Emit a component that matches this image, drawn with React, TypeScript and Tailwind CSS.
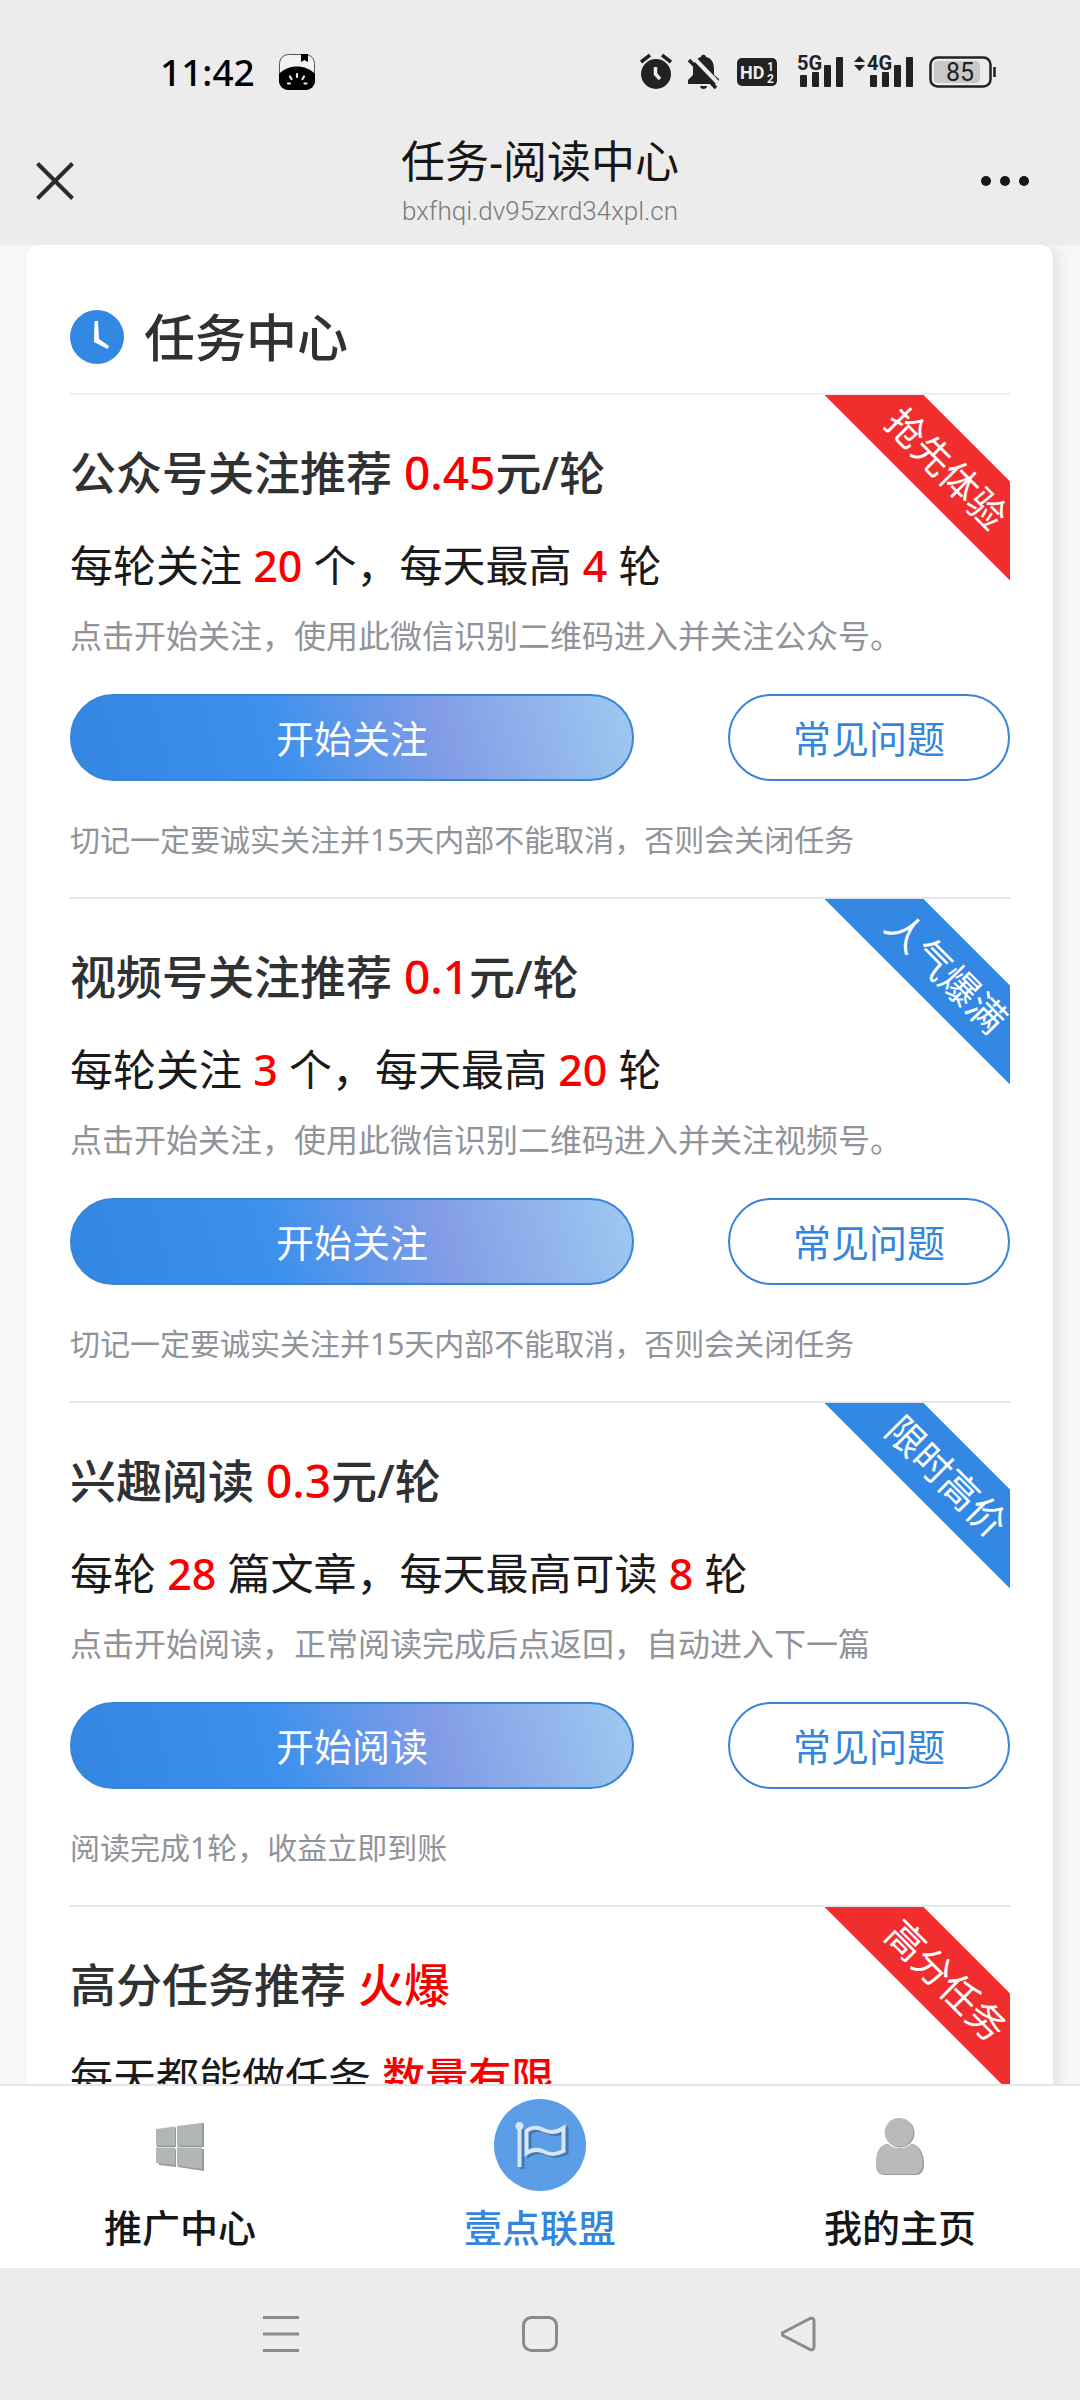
import type { ReactNode } from 'react';

type Task = {
  title: string;
  price: string;
  unit?: string;
  detail: ReactNode;
  desc?: string;
  action?: string;
  note?: string;
  badge: string;
  color: 'red' | 'blue';
};

const Num = ({ children }: { children: ReactNode }) => (
  <span className="font-medium text-[#f90000]">{children}</span>
);

const tasks: Task[] = [
  {
    title: '公众号关注推荐',
    price: '0.45',
    unit: '元/轮',
    detail: <>每轮关注 <Num>20</Num> 个，每天最高 <Num>4</Num> 轮</>,
    desc: '点击开始关注，使用此微信识别二维码进入并关注公众号。',
    action: '开始关注',
    note: '切记一定要诚实关注并15天内部不能取消，否则会关闭任务',
    badge: '抢先体验',
    color: 'red',
  },
  {
    title: '视频号关注推荐',
    price: '0.1',
    unit: '元/轮',
    detail: <>每轮关注 <Num>3</Num> 个，每天最高 <Num>20</Num> 轮</>,
    desc: '点击开始关注，使用此微信识别二维码进入并关注视频号。',
    action: '开始关注',
    note: '切记一定要诚实关注并15天内部不能取消，否则会关闭任务',
    badge: '人气爆满',
    color: 'blue',
  },
  {
    title: '兴趣阅读',
    price: '0.3',
    unit: '元/轮',
    detail: <>每轮 <Num>28</Num> 篇文章，每天最高可读 <Num>8</Num> 轮</>,
    desc: '点击开始阅读，正常阅读完成后点返回，自动进入下一篇',
    action: '开始阅读',
    note: '阅读完成1轮，收益立即到账',
    badge: '限时高价',
    color: 'blue',
  },
  {
    title: '高分任务推荐',
    price: '火爆',
    detail: <>每天都能做任务 <Num>数量有限</Num></>,
    badge: '高分任务',
    color: 'red',
  },
];

function SignalBars({ label, arrows }: { label: string; arrows?: boolean }) {
  return (
    <svg className="overflow-visible" width="62" height="34" viewBox="0 0 62 34" fill="#222">
      {arrows && <path d="M3 7h11L8.500 1zM3 10h11l-5.500 6z" />}
      <text x="16" y="15" fontFamily="'Liberation Sans Narrow', Roboto" fontWeight="700" fontSize="20">
        {label}
      </text>
      <rect x="19" y="20" width="7" height="12" rx="1" />
      <rect x="31" y="17" width="7" height="15" rx="1" />
      <rect x="43" y="10" width="7" height="22" rx="1" />
      <rect x="55" y="2" width="7" height="30" rx="1" />
    </svg>
  );
}

function StatusBar() {
  return (
    <div className="flex h-[116px] items-center justify-between pt-7 pr-[83px] pl-40">
      <div className="flex items-center gap-6">
        <span className="text-[37px] leading-9 font-medium text-black">11:42</span>
        <svg width="36" height="36" viewBox="0 0 36 36">
          <rect x=".5" y=".5" width="35" height="35" rx="9" fill="#f2f2f2" stroke="#555" strokeWidth="1" />
          <path d="M0 20C9 10 27 10 36 20v7a9 9 0 0 1-9 9H9a9 9 0 0 1-9-9z" fill="#000" />
          <path d="M22 0h7v8l-3.5-2L22 8z" fill="#000" />
          <g stroke="#ececec" strokeWidth="2.2" strokeLinecap="round">
            <path d="M18 20v3M11 22.500l1.500 2.500M25 22.500l-1.500 2.500M9 29.500h2M25.500 29.500h2" />
          </g>
        </svg>
      </div>
      <div className="flex items-center">
        <svg className="mr-4" width="32" height="36" viewBox="0 0 32 36">
          <circle cx="16" cy="20" r="15" fill="#222" />
          <path d="M1 8l9-7M31 8l-9-7" stroke="#222" strokeWidth="3.500" />
          <path d="M15.500 13v7l4.500 5" fill="none" stroke="#ececec" strokeWidth="3.500" />
        </svg>
        <svg className="mr-[18px]" width="31" height="36" viewBox="0 0 31 36">
          <path d="M0 30v-4l5-5v-6C5 8 9 4 13 3c0-3 5-3 5 0 5 1 8 5 8 12v6l5 4v5z" fill="#222" />
          <path d="M12 32h7c0 4-7 4-7 0z" fill="#222" />
          <path d="M4 2l28 29" stroke="#ececec" strokeWidth="4" />
          <path d="M1 6l27 28" stroke="#222" strokeWidth="3.500" />
        </svg>
        <svg className="mr-1" width="40" height="28" viewBox="0 0 40 28">
          <rect width="40" height="28" rx="5" fill="#222" />
          <g fill="#ececec" fontFamily="'Liberation Sans Narrow', Roboto" fontWeight="700">
            <text x="3" y="21" fontSize="18">HD</text>
            <text x="30" y="13" fontSize="12">1</text>
            <text x="30" y="25" fontSize="12">2</text>
          </g>
        </svg>
        <SignalBars label="5G" />
        <span className="w-2" />
        <SignalBars label="4G" arrows />
        <svg className="ml-4" width="68" height="32" viewBox="0 0 68 32">
          <rect x="1.500" y="1.500" width="60" height="29" rx="7" fill="none" stroke="#222" strokeWidth="2.500" />
          <rect x="5" y="5" width="46" height="22" rx="4" fill="#c8c8c8" />
          <path d="M65.500 11v10" stroke="#222" strokeWidth="2.500" />
          <text x="31" y="25" textAnchor="middle" fontFamily="Roboto" fontSize="25" fill="#222">85</text>
        </svg>
      </div>
    </div>
  );
}

function TitleBar() {
  return (
    <div className="flex h-[129px] items-center justify-between px-9">
      <button type="button" aria-label="关闭" className="w-14">
        <svg width="38" height="38" viewBox="0 0 38 38" stroke="#2c2c2c" strokeWidth="4">
          <path d="M1.500 1.500l35 35M36.500 1.500l-35 35" />
        </svg>
      </button>
      <div className="flex flex-col items-center gap-1">
        <h1 className="text-[44px] leading-14 text-[#161616]">任务-阅读中心</h1>
        <p className="font-['Roboto'] text-[26px] leading-9 font-light text-[#7b7b7b]">bxfhqi.dv95zxrd34xpl.cn</p>
      </div>
      <button type="button" aria-label="更多" className="flex w-14 justify-end gap-[9px] pr-[15px]">
        <span className="size-2.5 shrink-0 rounded-full bg-[#161616]" />
        <span className="size-2.5 shrink-0 rounded-full bg-[#161616]" />
        <span className="size-2.5 shrink-0 rounded-full bg-[#161616]" />
      </button>
    </div>
  );
}

function TaskItem({ task }: { task: Task }) {
  return (
    <section className="relative border-b-2 border-[#e4e7ed] pt-[45px] pb-[37px]">
      <div className="absolute top-0 right-0 size-[185px] overflow-hidden">
        <div
          className={`absolute top-[38px] left-[-28px] flex h-[70px] w-[300px] rotate-45 items-center justify-center text-[38px] text-white ${
            task.color === 'red' ? 'bg-[#f12d2d]' : 'bg-[#3388e3]'
          }`}
        >
          {task.badge}
        </div>
      </div>
      <h3 className="text-[46px] leading-16 font-medium text-[#303133]">
        {task.title} <Num>{task.price}</Num>
        {task.unit}
      </h3>
      <p className="mt-[34px] text-[43px] leading-14 text-[#1a1a1a]">{task.detail}</p>
      {task.desc && <p className="mt-5 text-[32px] leading-11 text-[#909399]">{task.desc}</p>}
      {task.action && (
        <div className="mt-9 flex justify-between">
          <button
            type="button"
            className="h-[87px] w-3/5 rounded-full border-2 border-[#3a84d8] bg-[linear-gradient(75deg,#3286e2_0%,#3d91ed_37%,#829ce6_65%,#9fcaf0_100%)] bg-origin-border pt-[2px] text-[38px] text-white"
          >
            {task.action}
          </button>
          <button
            type="button"
            className="h-[87px] w-3/10 rounded-full border-2 border-[#3a84d8] pt-[2px] text-[38px] text-[#3485dc]"
          >
            常见问题
          </button>
        </div>
      )}
      {task.note && <p className="mt-[39px] text-[30px] leading-10 text-[#909399]">{task.note}</p>}
    </section>
  );
}

function TabBar() {
  return (
    <nav className="grid grid-cols-3 border-t-2 border-[#e6e6e6] bg-white pt-[13px] pb-[13px] text-[38px] leading-14 font-medium text-[#161616]">
      <a href="#promo" className="flex flex-col items-center gap-2">
        <span className="flex h-[92px] items-center pt-1">
          <svg width="48" height="48" viewBox="0 0 48 48">
            <path d="M1 7l19-2.500V24H1zM22 4l26-4v24H22zM1 26h19v18L3 42zM22 26h26v22l-26-4z" fill="#989b9b" />
            <path d="M0 6l19-2.500V22.500H0zM21 3l25-3v22.500H21zM0 24.500h19V42L0 40zM21 24.500h25V46l-25-3.500z" fill="#b1b5b6" />
          </svg>
        </span>
        推广中心
      </a>
      <a href="#union" className="flex flex-col items-center gap-2 text-[#3485dc]">
        <span className="flex size-[92px] items-center justify-center rounded-full bg-[#5b9de7]">
          <svg width="92" height="92" viewBox="0 0 92 92" fill="none">
            <g stroke="#4478ae" strokeWidth="4" transform="translate(3 2)">
              <path d="M25.500 28v40" />
              <path d="M32.500 32c4-4 12-4 17-1 7 3 13 3 20-2v23c-8 4-13 4-19 1-6-3-12-3-18 1z" />
            </g>
            <g stroke="#d7e5f7" strokeWidth="4">
              <path d="M25.500 28v40" />
              <path d="M32.500 32c4-4 12-4 17-1 7 3 13 3 20-2v23c-8 4-13 4-19 1-6-3-12-3-18 1z" />
            </g>
            <circle cx="25.500" cy="27" r="4" fill="#d7e5f7" />
          </svg>
        </span>
        壹点联盟
      </a>
      <a href="#me" className="flex flex-col items-center gap-2">
        <span className="flex h-[92px] items-center pt-1">
          <svg width="48" height="58" viewBox="0 0 48 58">
            <path d="M12 26c6 6 18 6 24 0 8 1 12 10 12 21 0 7-4 10-8 10H9c-5 0-9-3-9-10 0-11 3-20 12-21z" fill="#999b9d" />
            <path d="M11 26c7 6 17 6 24 0 8 1 11.500 9 11.500 20 0 7-4 10-8 10H9c-5 0-9-3-9-10 0-11 3-19 11-20z" fill="#b8babc" />
            <circle cx="24" cy="15" r="14.500" fill="#999b9d" />
            <circle cx="23" cy="14.300" r="14.300" fill="#b8babc" />
          </svg>
        </span>
        我的主页
      </a>
    </nav>
  );
}

function SystemNav() {
  return (
    <div className="grid h-[132px] grid-cols-3 place-items-center bg-[#ececec] px-[152px]">
      <button type="button" aria-label="最近任务">
        <svg width="36" height="36" viewBox="0 0 36 36" stroke="#8a8a8a" strokeWidth="3">
          <path d="M0 1.500h36M0 18h36M0 34.500h36" />
        </svg>
      </button>
      <button type="button" aria-label="主屏幕">
        <svg width="36" height="36" viewBox="0 0 36 36" fill="none" stroke="#8a8a8a" strokeWidth="3">
          <rect x="1.500" y="1.500" width="33" height="33" rx="8" />
        </svg>
      </button>
      <button type="button" aria-label="返回">
        <svg width="36" height="36" viewBox="0 0 36 36" fill="none" stroke="#8a8a8a" strokeWidth="3" strokeLinejoin="round">
          <path d="M29 2.500L2 16.500q-2 1.500 0 3l27 14q4 1 4-2.500V5q0-3.500-4-2.500z" />
        </svg>
      </button>
    </div>
  );
}

function App() {
  return (
    <div className="flex h-screen flex-col bg-[#f7f7f7] font-['Noto_Sans','Noto_Sans_CJK_SC',sans-serif]">
      <header className="shrink-0 bg-[#ececec]">
        <StatusBar />
        <TitleBar />
      </header>
      <main className="min-h-0 flex-1 overflow-hidden px-[27px]">
        <div className="min-h-full rounded-xl bg-white px-[43px] shadow-[6px_0_12px_rgba(0,0,0,0.08)]">
          <div className="flex items-center gap-5 border-b-2 border-[#efefef] pt-[58px] pb-[22px]">
            <svg width="54" height="54" viewBox="0 0 54 54">
              <circle cx="27" cy="27" r="27" fill="#3388e3" />
              <path d="M24.500 11h3.500l1 18 10 7-1.500 3L24 32z" fill="#fff" />
            </svg>
            <h2 className="text-[51px] leading-[68px] font-medium text-[#303133]">任务中心</h2>
          </div>
          {tasks.map((task) => (
            <TaskItem key={task.title} task={task} />
          ))}
        </div>
      </main>
      <TabBar />
      <SystemNav />
    </div>
  );
}

export default App;
